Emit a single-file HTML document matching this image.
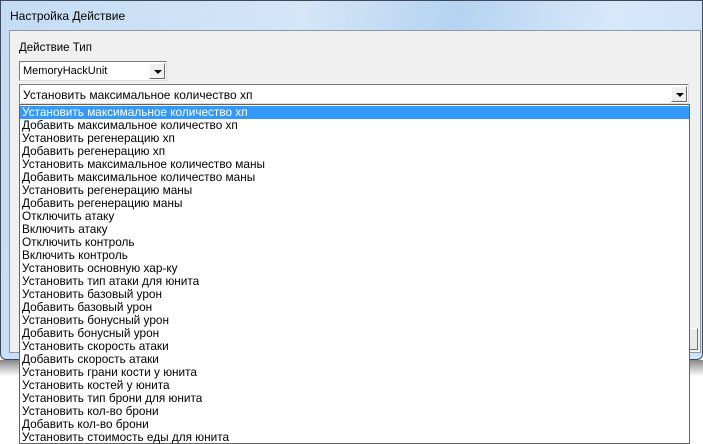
<!DOCTYPE html>
<html><head><meta charset="utf-8"><style>
*{margin:0;padding:0;box-sizing:border-box}
body{width:703px;height:442px;background:#fff;position:relative;overflow:hidden;font-family:"Liberation Sans",sans-serif;font-size:11px;color:#000}
.win{position:absolute;left:0;top:0;width:703px;height:360px;border:1px solid #3b4a5c;border-radius:0 0 6px 6px;background:linear-gradient(100deg,#c4dcf3 0%,#d4e6f8 40%,#b5d3ef 60%,#d6e8fa 80%,#cfe3f7 100%)}
.title{position:absolute;left:9px;top:8px;font-size:12px;color:#000}
.panel{position:absolute;left:8px;top:29px;width:692px;height:323px;background:#f0f0f0;border:1px solid #8a98a8}
.shadow{position:absolute;left:0;top:360px;width:703px;height:16px;background:linear-gradient(#888,#fff)}
.lbl{position:absolute;left:19px;top:42px;font-size:11.5px}
.cb{position:absolute;background:#fff;border:1px solid #7a7a7a;border-right-color:#ddd;border-bottom-color:#ddd}
.btn{position:absolute;top:1px;right:1px;width:16px;background:#f0f0f0;border:1px solid #fff;border-right-color:#696969;border-bottom-color:#696969}
.btn:after{content:"";position:absolute;left:4px;top:6px;border-left:4px solid transparent;border-right:4px solid transparent;border-top:4px solid #000}
.list{position:absolute;left:19px;top:104px;width:671px;height:340px;background:#fff;border:1px solid #646464}
.list div{height:13px;line-height:13px;padding-left:2px;white-space:nowrap}
.list .sel{background:#3399ff;color:#fff}
.bb{position:absolute;left:640px;top:328px;width:58px;height:22px;border:1px solid #fff;border-right-color:#707070;border-bottom-color:#707070;background:#eaeaea}
</style></head><body>
<div class="win"><div class="title">Настройка Действие</div>
<div class="panel"></div></div>
<div class="bb"></div>
<div class="shadow"></div>
<div class="lbl">Действие Тип</div>
<div class="cb" style="left:19px;top:61px;width:148px;height:20px"><span style="position:absolute;left:3px;top:3px">MemoryHackUnit</span><div class="btn" style="height:16px"></div></div>
<div class="cb" style="left:19px;top:84px;width:670px;height:20px;font-size:12px"><span style="position:absolute;left:3px;top:3px">Установить максимальное количество хп</span><div class="btn" style="height:16px"></div></div>
<div class="list" style="padding-top:1px;font-size:11.8px">
<div class="sel">Установить максимальное количество хп</div>
<div>Добавить максимальное количество хп</div>
<div>Установить регенерацию хп</div>
<div>Добавить регенерацию хп</div>
<div>Установить максимальное количество маны</div>
<div>Добавить максимальное количество маны</div>
<div>Установить регенерацию маны</div>
<div>Добавить регенерацию маны</div>
<div>Отключить атаку</div>
<div>Включить атаку</div>
<div>Отключить контроль</div>
<div>Включить контроль</div>
<div>Установить основную хар-ку</div>
<div>Установить тип атаки для юнита</div>
<div>Установить базовый урон</div>
<div>Добавить базовый урон</div>
<div>Установить бонусный урон</div>
<div>Добавить бонусный урон</div>
<div>Установить скорость атаки</div>
<div>Добавить скорость атаки</div>
<div>Установить грани кости у юнита</div>
<div>Установить костей у юнита</div>
<div>Установить тип брони для юнита</div>
<div>Установить кол-во брони</div>
<div>Добавить кол-во брони</div>
<div>Установить стоимость еды для юнита</div>
</div>
</body></html>
